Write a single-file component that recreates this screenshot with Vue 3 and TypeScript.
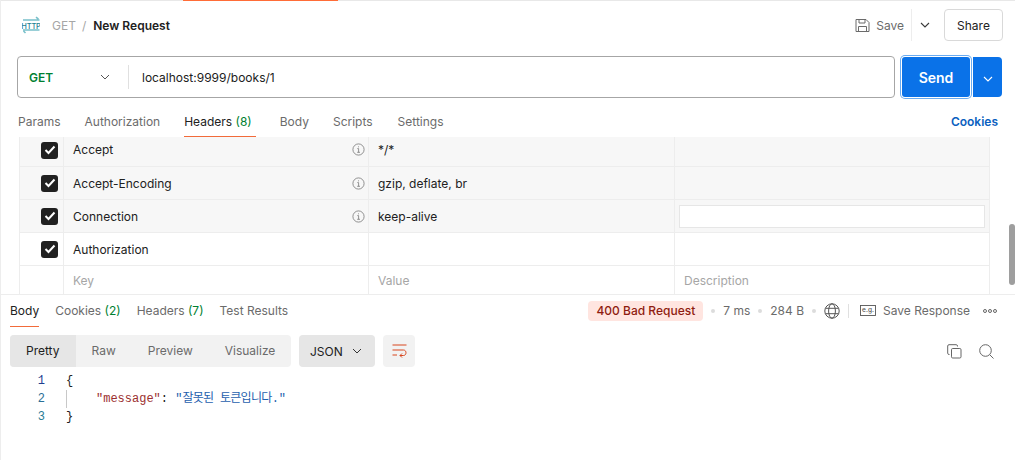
<script setup lang="ts">
interface Row { key: string; value: string; on: boolean; info: boolean; desc?: boolean; grey: boolean; h: string }
const rows: Row[] = [
  { key: 'Accept', value: '*/*', on: true, info: true, grey: true, h: 'first' },
  { key: 'Accept-Encoding', value: 'gzip, deflate, br', on: true, info: true, grey: true, h: '' },
  { key: 'Connection', value: 'keep-alive', on: true, info: true, desc: true, grey: true, h: '' },
  { key: 'Authorization', value: '', on: true, info: false, grey: false, h: '' }
]
const reqTabs = ['Params', 'Authorization']
const reqTabsAfter = ['Body', 'Scripts', 'Settings']
const modes = ['Raw', 'Preview', 'Visualize']
</script>

<template>
  <div class="page">
    <div class="topline"><span class="active-tab"></span></div>

    <header class="head">
      <div class="crumb">
        <svg class="http" width="18" height="18" viewBox="0 0 18 18" fill="none">
          <path d="M1 4H17.5M14 1.2L16.5 3.2" stroke="#78c0ca" stroke-width="1.6"/>
          <path d="M1 14H17.5M3.5 17L1.5 15" stroke="#78c0ca" stroke-width="1.6"/>
          <text x="9" y="12.7" text-anchor="middle" class="http-t" fill="#1d8193">HTTP</text>
        </svg>
        <span class="c-get">GET</span>
        <span class="c-sl">/</span>
        <span class="c-name">New Request</span>
      </div>
      <div class="actions">
        <svg width="15" height="15" viewBox="0 0 15 15" fill="none" stroke="#6b6b6b" stroke-width="1">
          <path d="M1 1.5H11L14 4.5V13.5H1Z"/>
          <path d="M4 1.5V5H10V1.5M3.5 13.5V8.5H11.5V13.5"/>
        </svg>
        <span class="save">Save</span>
        <span class="vsep"></span>
        <svg class="chev-save" width="10" height="6" viewBox="0 0 10 6" fill="none" stroke="#3a3a3a" stroke-width="1.1"><path d="M1 1L5 5L9 1"/></svg>
        <button class="share">Share</button>
      </div>
    </header>

    <div class="urlrow">
      <div class="urlbox">
        <div class="method">
          <span>GET</span>
          <svg width="10" height="6" viewBox="0 0 10 6" fill="none" stroke="#555" stroke-width="1"><path d="M1 1L5 5L9 1"/></svg>
        </div>
        <span class="urlsep"></span>
        <span class="url">localhost:9999/books/1</span>
      </div>
      <button class="send">Send</button>
      <button class="send-more">
        <svg width="10" height="6" viewBox="0 0 10 6" fill="none" stroke="#fff" stroke-width="1.1"><path d="M1 1L5 5L9 1"/></svg>
      </button>
    </div>

    <nav class="reqtabs">
      <span v-for="t in reqTabs" :key="t" class="rt">{{ t }}</span>
      <span class="rt on">Headers <em>(8)</em></span>
      <span v-for="t in reqTabsAfter" :key="t" class="rt">{{ t }}</span>
      <span class="cookies">Cookies</span>
    </nav>

    <section class="tablewrap">
      <div class="table">
        <div v-for="r in rows" :key="r.key" class="row" :class="{ grey: r.grey, first: r.h === 'first' }">
          <div class="c c0">
            <span class="check">
              <svg width="12" height="10" viewBox="0 0 12 10" fill="none" stroke="#fff" stroke-width="2"><path d="M1.5 5L4.5 8L10.5 1.5"/></svg>
            </span>
          </div>
          <div class="c c1">
            <span>{{ r.key }}</span>
            <svg v-if="r.info" class="info" width="13" height="13" viewBox="0 0 13 13" fill="none" stroke="#777" stroke-width="0.8">
              <circle cx="6.5" cy="6.5" r="5.6"/>
              <path d="M5.3 5.6H6.6V9.3M5.2 9.3H8M6.5 3.4V4.3"/>
            </svg>
          </div>
          <div class="c c2">{{ r.value }}</div>
          <div class="c c3"><span v-if="r.desc" class="descinput"></span></div>
        </div>
        <div class="row last">
          <div class="c c0"></div>
          <div class="c c1 ph">Key</div>
          <div class="c c2 ph">Value</div>
          <div class="c c3 ph">Description</div>
        </div>
      </div>
      <span class="scroll"></span>
    </section>

    <section class="resp">
      <div class="resptabs">
        <div class="rtabs">
          <span class="pt on">Body</span>
          <span class="pt">Cookies <em>(2)</em></span>
          <span class="pt">Headers <em>(7)</em></span>
          <span class="pt">Test Results</span>
        </div>
        <div class="meta">
          <span class="status">400 Bad Request</span>
          <i class="dot"></i>
          <span>7 ms</span>
          <i class="dot"></i>
          <span>284 B</span>
          <i class="dot"></i>
          <svg width="16" height="16" viewBox="0 0 16 16" fill="none" stroke="#555" stroke-width="1">
            <circle cx="8" cy="8" r="7.2"/>
            <ellipse cx="8" cy="8" rx="3.4" ry="7.2"/>
            <path d="M1.5 5.3H14.5M1.5 10.7H14.5"/>
          </svg>
          <span class="vsep2"></span>
          <svg width="16" height="11" viewBox="0 0 16 11" fill="none" stroke="#555" stroke-width="0.9">
            <rect x="0.5" y="0.5" width="15" height="10"/>
            <text x="8" y="7.4" text-anchor="middle" class="eg" fill="#555" stroke="none">e.g.</text>
          </svg>
          <span class="saveresp">Save Response</span>
          <svg class="more" width="14" height="4" viewBox="0 0 14 4" fill="none" stroke="#555" stroke-width="0.9">
            <circle cx="2" cy="2" r="1.5"/><circle cx="7" cy="2" r="1.5"/><circle cx="12" cy="2" r="1.5"/>
          </svg>
        </div>
      </div>

      <div class="tools">
        <div class="seg">
          <span class="m on">Pretty</span>
          <span v-for="m in modes" :key="m" class="m">{{ m }}</span>
        </div>
        <div class="json">
          <span>JSON</span>
          <svg width="10" height="6" viewBox="0 0 10 6" fill="none" stroke="#333" stroke-width="1"><path d="M1 1L5 5L9 1"/></svg>
        </div>
        <div class="wrapbtn">
          <svg width="15" height="14" viewBox="0 0 15 14" fill="none" stroke="#d8461f" stroke-width="1">
            <path d="M0.5 1H14.5M0.5 6H11.5C14.8 6 14.8 11.5 11.5 11.5H8M10 9.5L8 11.5L10 13.5M0.5 11H5"/>
          </svg>
        </div>
        <div class="righticons">
          <svg width="15" height="15" viewBox="0 0 15 15" fill="none" stroke="#666" stroke-width="1">
            <rect x="4.5" y="4.5" width="9.5" height="9.5" rx="1.2"/>
            <path d="M2.5 10.5H2C1.2 10.5 0.7 10 0.7 9.2V2C0.7 1.2 1.2 0.7 2 0.7H9.2C10 0.7 10.5 1.2 10.5 2V2.5"/>
          </svg>
          <svg width="15" height="15" viewBox="0 0 15 15" fill="none" stroke="#666" stroke-width="1">
            <circle cx="6.5" cy="6.5" r="5.8"/><path d="M10.8 10.8L14.5 14.5"/>
          </svg>
        </div>
      </div>

      <div class="code">
        <div class="ln"><span class="no n1">1</span><span class="tx">{</span></div>
        <div class="ln"><span class="no n2">2</span><span class="tx guide"><span class="k">"message"</span>: <span class="s">"<span class="ko">잘못된 토큰입니다</span>."</span></span></div>
        <div class="ln"><span class="no n3">3</span><span class="tx">}</span></div>
      </div>
    </section>
  </div>
</template>

<style scoped>
.page {
  width: 1015px;
  height: 460px;
  overflow: hidden;
  background: #fff;
  font-family: Inter, "Noto Sans CJK KR", sans-serif;
  font-size: 12px;
  color: #212121;
  box-sizing: border-box;
  border-left: 1px solid #ededed;
  display: flex;
  flex-direction: column;
}
.topline {
  height: 1px;
  background: #e8e8e8;
  flex: none;
  padding-left: 182px;
}
.active-tab { display: block; width: 155px; height: 1px; background: #ff6c37; }
.head {
  height: 49px;
  box-sizing: border-box;
  flex: none;
  display: flex;
  align-items: center;
  justify-content: space-between;
  padding: 0 12px 1px 21px;
}
.crumb { display: flex; align-items: center; }
.http { margin-right: 12px; }
.http-t { font-size: 7.5px; font-weight: 500; letter-spacing: -0.2px; }
.c-get { color: #a6a6a6; }
.c-sl { margin: 0 7px 0 6px; color: #a6a6a6; }
.c-name { font-weight: 600; }
.actions { display: flex; align-items: center; }
.save { margin-left: 6px; color: #6b6b6b; }
.vsep { width: 1px; height: 32px; background: #ededed; margin-left: 7px; }
.chev-save { margin: 0 0 0 8px; }
.share {
  margin-left: 14px;
  width: 59px;
  height: 32px;
  border: 1px solid #d9d9d9;
  border-radius: 4px;
  background: #fff;
  font: inherit;
  color: #212121;
  padding: 0;
}
.urlrow {
  display: flex;
  align-items: center;
  padding: 0 12px 0 16px;
  height: 44px;
  margin-top: 5px;
  flex: none;
}
.urlbox {
  width: 878px;
  height: 42px;
  box-sizing: border-box;
  border: 1px solid #a6a6a6;
  border-radius: 4px;
  display: flex;
  align-items: center;
  margin-right: 7px;
}
.method {
  width: 110px;
  box-sizing: border-box;
  padding: 0 18px 0 11px;
  display: flex;
  align-items: center;
  justify-content: space-between;
  color: #007f31;
  font-weight: 600;
}
.urlsep { width: 1px; height: 24px; background: #e0e0e0; }
.url { margin-left: 13px; }
.send {
  width: 68px;
  height: 40px;
  box-sizing: border-box;
  background: #0a72e8;
  color: #fff;
  border: 0;
  box-shadow: 0 0 0 1px #fff, 0 0 0 2px #6aabf0;
  border-radius: 3px;
  font: 600 14px Inter, sans-serif;
  padding: 0;
}
.send-more {
  margin-left: 3px;
  width: 29px;
  height: 40px;
  background: #0a72e8;
  border: 0;
  border-radius: 0 4px 4px 0;
  padding: 0;
}
.reqtabs {
  height: 38px;
  flex: none;
  display: flex;
  align-items: flex-end;
  padding: 0 17px;
  color: #6b6b6b;
}
.rt {
  padding: 0 0 6px;
  margin-right: 24px;
  height: 17px;
  line-height: 17px;
  border-bottom: 1px solid transparent;
}
.rt:nth-child(5) { margin-right: 25px; }
.rt.on { color: #212121; border-bottom-color: #f26b3a; padding-right: 4px; }
.rt em, .pt em { font-style: normal; color: #007f31; }
.cookies {
  margin-left: auto;
  color: #0a5fc0;
  font-weight: 600;
  font-size: 12px;
  padding-bottom: 6px;
  line-height: 17px;
  height: 17px;
  border-bottom: 1px solid transparent;
}
.tablewrap {
  height: 158px;
  flex: none;
  position: relative;
  box-sizing: border-box;
  border-bottom: 1px solid #ededed;
  padding-left: 18px;
}
.table { width: 971px; box-sizing: border-box; border-left: 1px solid #ededed; border-right: 1px solid #ededed; height: 157px; }
.row {
  display: grid;
  grid-template-columns: 44px 305px 306px 1fr;
  height: 33px;
  box-sizing: border-box;
  border-bottom: 1px solid #ededed;
}
.row.first { height: 30px; }
.row.last { height: 28px; border-bottom: 0; }
.row.grey { background: #f7f7f7; }
.c {
  display: flex;
  align-items: center;
  box-sizing: border-box;
  border-right: 1px solid #ededed;
  padding: 0 5px 0 9px;
  min-width: 0;
}
.c3 { border-right: 0; padding: 0 4px; }
.c0 { justify-content: flex-end; padding: 0 5px 0 0; }
.c1 { justify-content: space-between; padding-right: 3px; }
.check {
  width: 17px;
  height: 17px;
  background: #212121;
  border-radius: 3px;
  display: flex;
  align-items: center;
  justify-content: center;
}
.row.first .c { padding-bottom: 4px; }
.row.first .c0 { padding-bottom: 3px; }
.info { flex: none; }
.descinput { display: block; width: 100%; height: 23px; box-sizing: border-box; background: #fff; border: 1px solid #e6e6e6; }
.ph { color: #a6a6a6; }
.c3.ph { padding-left: 9px; }
.scroll {
  position: absolute;
  right: 0;
  top: 87px;
  width: 6px;
  height: 61px;
  background: #9e9e9e;
  border-radius: 3px;
}
.resp { flex: 1; min-height: 0; }
.resptabs {
  height: 32px;
  display: flex;
  justify-content: space-between;
  padding: 0 18px 0 9px;
  box-sizing: border-box;
}
.rtabs { display: flex; height: 32px; }
.pt {
  margin-right: 16px;
  line-height: 31px;
  color: #6b6b6b;
  height: 32px;
  box-sizing: border-box;
}
.pt.on { color: #212121; border-bottom: 1px solid #f26b3a; }
.meta { display: flex; align-items: center; color: #6b6b6b; padding-bottom: 1px; }
.status {
  background: #ffe5e0;
  color: #8f1c10;
  height: 20px;
  line-height: 20px;
  padding: 0 8px;
  border-radius: 4px;
  font-weight: 500;
}
.dot { width: 4px; height: 4px; border-radius: 50%; background: #dcdcdc; margin: 0 8px; }
.vsep2 { width: 1px; height: 14px; background: #e0e0e0; margin: 0 11px 0 8px; }
.eg { font-size: 6.5px; font-weight: 500; }
.saveresp { margin-left: 7px; }
.more { margin-left: 13px; }
.tools {
  display: flex;
  align-items: center;
  padding: 8px 21px 0 9px;
  height: 32px;
}
.seg {
  display: flex;
  width: 281px;
  height: 32px;
  background: #f2f2f2;
  border-radius: 4px;
  overflow: hidden;
  color: #6b6b6b;
}
.m { line-height: 32px; padding: 0 16px; }
.m.on { background: #e6e6e6; color: #212121; width: 66px; box-sizing: border-box; }
.json {
  width: 76px;
  height: 32px;
  margin-left: 8px;
  background: #e6e6e6;
  border-radius: 4px;
  box-sizing: border-box;
  padding: 0 13px 0 11px;
  display: flex;
  align-items: center;
  justify-content: space-between;
}
.wrapbtn {
  width: 32px;
  height: 32px;
  margin-left: 8px;
  background: #f2f2f2;
  border-radius: 4px;
  display: flex;
  align-items: center;
  justify-content: center;
}
.righticons { margin-left: auto; display: flex; align-items: center; gap: 17px; }
.code {
  margin-top: 5px;
  font-family: "Liberation Mono", "Noto Sans CJK KR", monospace;
  font-size: 12px;
  line-height: 18px;
}
.ln { display: flex; height: 18px; }
.no { width: 44px; text-align: right; flex: none; }
.n1 { color: #1f3f8f; }
.n2 { color: #2a6f96; }
.n3 { color: #2a7d96; }
.tx { margin-left: 21px; white-space: pre; color: #212121; }
.guide { border-left: 1px solid #c8c8c8; margin-left: 21px; padding-left: 29px; }
.k { color: #9c2f2f; }
.s { color: #1f5fae; }
.ko { letter-spacing: -0.7px; }
</style>
